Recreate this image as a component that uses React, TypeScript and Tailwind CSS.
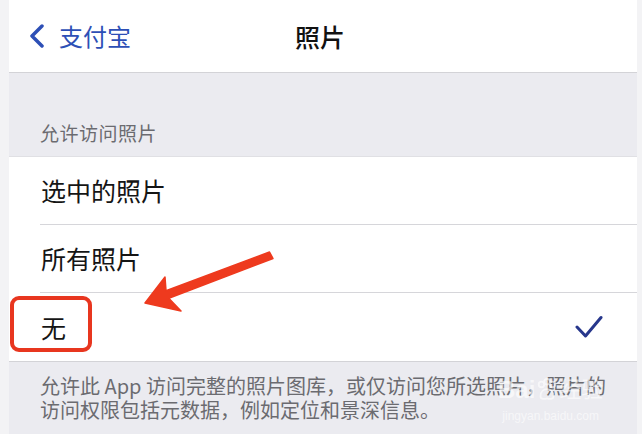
import { FC } from 'react';

const font = { fontFamily: '"Noto Sans CJK SC", "Noto Sans", sans-serif' };

const rows = ['选中的照片', '所有照片', '无'];

const Row: FC<{ label: string; last: boolean; checked: boolean }> = ({ label, last, checked }) => (
  <div className="h-[68px] pl-[31px]">
    <div
      className={`h-full flex items-center justify-between pr-[34px] ${
        last ? '' : 'border-b border-[#d6d6da]'
      }`}
    >
      <span className="text-[25px] leading-none text-[#151515] pl-[1px]">{label}</span>
      {checked && (
        <svg width="28" height="24" viewBox="0 0 28 24" fill="none">
          <path
            d="M2 12 L10.5 21 L26 2.5"
            stroke="#27378c"
            strokeWidth="3"
            strokeLinecap="round"
            strokeLinejoin="round"
          />
        </svg>
      )}
    </div>
  </div>
);

const Paw: FC = () => (
  <svg width="24" height="24" viewBox="0 0 26 26" fill="none" stroke="#ffffff" strokeWidth="2">
    <circle cx="7" cy="7" r="3" />
    <circle cx="13" cy="4" r="3" />
    <circle cx="19" cy="7" r="3" />
    <path d="M6 20 C6 14 10 12 13 12 C16 12 20 14 20 20 C20 23 16 23 13 22 C10 23 6 23 6 20 Z" />
  </svg>
);

export default function App() {
  return (
    <div className="relative w-[642px] h-[434px] overflow-hidden bg-[#f3f3f5] pl-[9px] pr-[5px]" style={font}>
      <div className="relative h-full flex flex-col bg-[#ebebf0]">
        {/* nav bar */}
        <div className="relative h-[73px] shrink-0 bg-white border-b border-[#d3d3d7] flex items-center">
          <div className="flex items-center pl-[19px] gap-[13px] text-[#2d4fb6]">
            <svg width="18" height="24" viewBox="0 0 18 24" fill="none">
              <path
                d="M14 2 L4 12 L14 22"
                stroke="#2d4fb6"
                strokeWidth="3.5"
                strokeLinecap="round"
                strokeLinejoin="round"
              />
            </svg>
            <span className="text-[24px] leading-none">支付宝</span>
          </div>
          <div className="absolute left-[286px] top-0 h-full flex items-center">
            <span className="text-[25px] leading-none font-medium text-[#111]">照片</span>
          </div>
        </div>

        {/* section header */}
        <div className="h-[83px] shrink-0 flex items-end pl-[31px] pb-[14px]">
          <span className="text-[19px] leading-none text-[#6b6b70] tracking-[0.5px]">允许访问照片</span>
        </div>

        {/* list */}
        <div className="bg-white border-t border-[#e0e0e4] border-b border-b-[#d3d3d7]">
          {rows.map((r, i) => (
            <Row key={r} label={r} last={i === rows.length - 1} checked={i === rows.length - 1} />
          ))}
        </div>

        {/* footer */}
        <div className="pl-[31px] pt-[12px] text-[20px] leading-[24px] text-[#6b6b70]">
          允许此 App 访问完整的照片图库，或仅访问您所选照片，照片的
          <br />
          访问权限包括元数据，例如定位和景深信息。
        </div>

        {/* red highlight box */}
        <div className="absolute left-[1px] top-[296px] w-[82px] h-[56px] rounded-[9px] border-[4px] border-[#e8361f]" />
      </div>

      {/* watermark */}
      <div className="absolute left-[498px] top-[378px] flex flex-col items-center opacity-60 pointer-events-none">
        <div
          className="flex items-center text-white text-[24px] leading-none font-bold"
          style={{ fontFamily: '"Liberation Sans", "Noto Sans CJK SC", sans-serif' }}
        >
          <span>Bai</span>
          <Paw />
          <span className="font-normal text-[22px]">经验</span>
        </div>
        <span className="text-[12px] leading-none text-white mt-[8px]" style={{ fontFamily: '"Liberation Sans", sans-serif' }}>
          jingyan.baidu.com
        </span>
      </div>

      {/* arrow */}
      <svg className="absolute left-0 top-0 pointer-events-none" width="642" height="434" viewBox="0 0 642 434">
        <polygon
          points="145,303 165,277 166,290.8 269.5,252 273,258.5 168.8,298.2 181,311"
          fill="#ee3a1e"
          stroke="#ee3a1e"
          strokeWidth="1.5"
          strokeLinejoin="round"
        />
      </svg>
    </div>
  );
}
